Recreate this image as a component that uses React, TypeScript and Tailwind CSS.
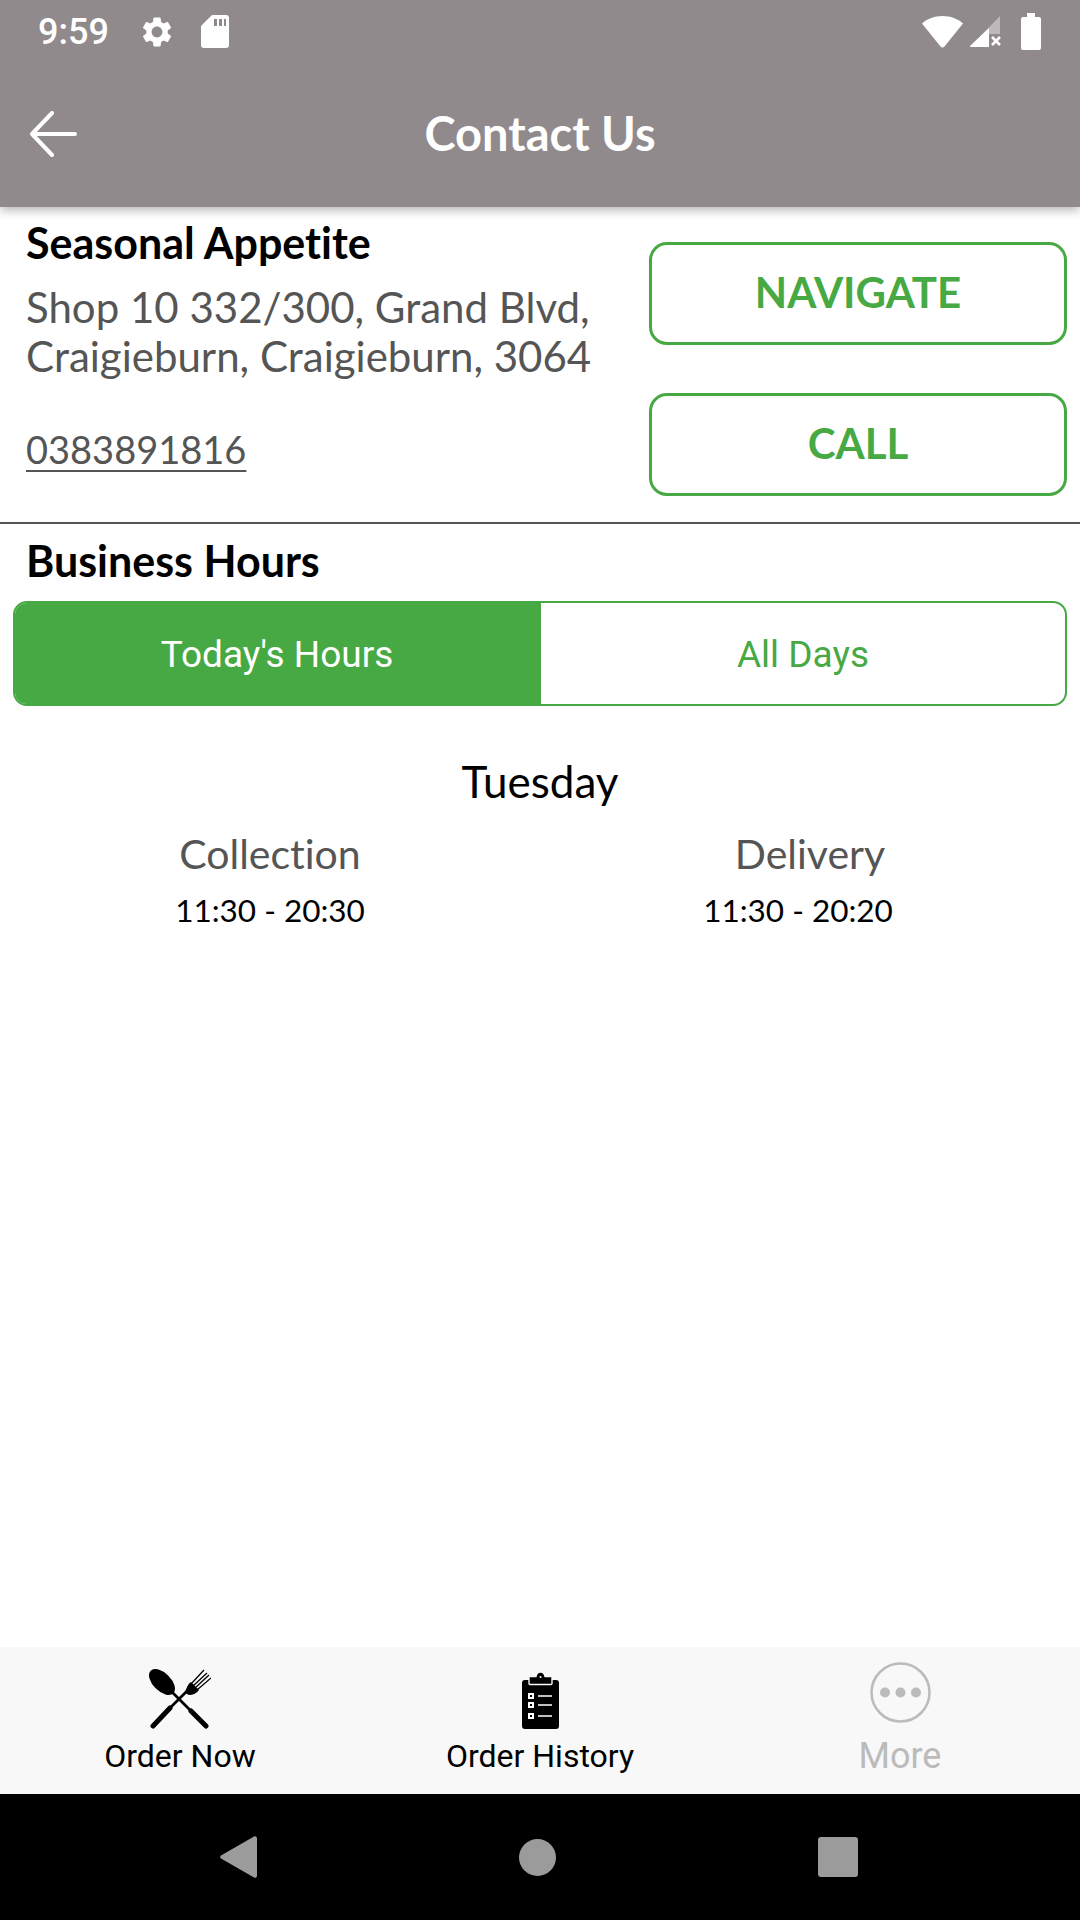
import React from 'react';

const proxima = "font-['Lato','Liberation_Sans',sans-serif] [font-variant-ligatures:none]";
const roboto = "font-['Roboto','Liberation_Sans',sans-serif]";

function StatusBar() {
  return (
    <div className="flex h-[60px] items-center pl-[38px] pr-[39px] pt-[3px]">
      <span className={`${roboto} text-[36px] font-medium leading-none text-white`}>9:59</span>
      <svg className="ml-[30px] h-[36px] w-[36px]" viewBox="0 0 24 24" fill="#fff">
        <path d="M19.14 12.94c.04-.3.06-.61.06-.94 0-.32-.02-.64-.07-.94l2.03-1.58a.49.49 0 0 0 .12-.61l-1.92-3.32a.488.488 0 0 0-.59-.22l-2.39.96c-.5-.38-1.03-.7-1.62-.94l-.36-2.54a.484.484 0 0 0-.48-.41h-3.84c-.24 0-.43.17-.47.41l-.36 2.54c-.59.24-1.13.57-1.62.94l-2.39-.96c-.22-.08-.47 0-.59.22L2.74 8.87c-.12.21-.08.47.12.61l2.03 1.58c-.05.3-.09.63-.09.94s.02.64.07.94l-2.03 1.58a.49.49 0 0 0-.12.61l1.92 3.32c.12.22.37.29.59.22l2.39-.96c.5.38 1.03.7 1.62.94l.36 2.54c.05.24.24.41.48.41h3.84c.24 0 .44-.17.47-.41l.36-2.54c.59-.24 1.13-.56 1.62-.94l2.39.96c.22.08.47 0 .59-.22l1.92-3.32c.12-.22.07-.47-.12-.61l-2.01-1.58zM12 15.6c-1.98 0-3.6-1.62-3.6-3.6s1.62-3.6 3.6-3.6 3.6 1.62 3.6 3.6-1.62 3.6-3.6 3.6z" />
      </svg>
      <svg className="ml-[26px] h-[33px] w-[28px]" viewBox="0 0 28 33">
        <path d="M11 0h14a3 3 0 0 1 3 3v27a3 3 0 0 1-3 3H3a3 3 0 0 1-3-3V11z" fill="#fff" />
        <path d="M13 4h3v7h-3zM18 4h3v7h-3zM23 4h2v7h-2z" fill="#918a8d" />
      </svg>
      <div className="ml-auto flex items-center">
        <svg className="h-[32px] w-[41px]" viewBox="0 0 41 32">
          <path d="M20.5 0C12.5 0 5.5 2.7 0 7.5L18.5 30.5a2.6 2.6 0 0 0 4 0L41 7.5C35.5 2.7 28.5 0 20.5 0z" fill="#fff" />
        </svg>
        <svg className="ml-[7px] h-[32px] w-[32px]" viewBox="0 0 32 32">
          <path d="M30 0v18H19v13H0z" fill="#fff" fillOpacity="0.4" />
          <path d="M19 12v19H1a1 1 0 0 1-1-1z" fill="#fff" />
          <path d="M22 21l8 8M30 21l-8 8" stroke="#fff" strokeWidth="2.6" />
        </svg>
        <svg className="ml-[19px] h-[37px] w-[20px]" viewBox="0 0 20 37">
          <path d="M6 0h8v4h4a2 2 0 0 1 2 2v29a2 2 0 0 1-2 2H2a2 2 0 0 1-2-2V6a2 2 0 0 1 2-2h4z" fill="#fff" />
        </svg>
      </div>
    </div>
  );
}

function OutlineButton({ label }: { label: string }) {
  return (
    <button className={`${proxima} flex h-[103px] w-full items-center justify-center rounded-[18px] border-[3px] border-[#47a943] pb-[3px] text-[42px] font-bold text-[#47a943]`}>
      {label}
    </button>
  );
}

function Hours({ title, time, timeClass }: { title: string; time: string; timeClass: string }) {
  return (
    <div className="flex flex-col items-center">
      <div className="text-[41px] leading-[48px] text-[#555555]">{title}</div>
      <div className={`mt-[8px] text-[31.5px] leading-[48px] text-black ${timeClass}`}>{time}</div>
    </div>
  );
}

function SpoonFork() {
  return (
    <svg className="h-[60px] w-[62px]" viewBox="0 0 62 60" fill="#000">
      <ellipse cx="13" cy="13" rx="9" ry="16" transform="rotate(-45 13 13)" />
      <path d="M22 22l23 23" stroke="#000" strokeWidth="2.6" />
      <path d="M42 42l15 15" stroke="#000" strokeWidth="5" strokeLinecap="round" />
      <path d="M40 20L18 42" stroke="#000" strokeWidth="2.6" />
      <path d="M21 39L4 57" stroke="#000" strokeWidth="5" strokeLinecap="round" />
      <path d="M36 24c1-5 3-9 6-11l8 8c-2 3-6 5-10 5z" />
      <path d="M42 15L55 1M44 17L58 4M46 19L60 6M48 21L62 9" stroke="#000" strokeWidth="1.3" />
    </svg>
  );
}

function Clipboard() {
  return (
    <svg className="h-[57px] w-[37px]" viewBox="0 0 37 57">
      <path d="M3 8h31a3 3 0 0 1 3 3v43a3 3 0 0 1-3 3H3a3 3 0 0 1-3-3V11a3 3 0 0 1 3-3z" fill="#000" />
      <path d="M7 4.5h7C14.5 1.5 16 0 18.5 0S22.5 1.5 23 4.5h7v7a1 1 0 0 1-1 1H8a1 1 0 0 1-1-1z" fill="#000" stroke="#f8f8f8" strokeWidth="1.4" />
      <circle cx="18.5" cy="5" r="1" fill="#f8f8f8" />
      <path d="M6 21h6v6H6zM6 30h6v6H6zM6 41h6v6H6z" fill="#fff" />
      <path d="M8 23h2v2H8zM8 32h2v2H8zM8 43h2v2H8z" fill="#000" />
      <path d="M16 24h14M16 33h14M16 44h14" stroke="#fff" strokeWidth="1.6" />
    </svg>
  );
}

function TabItem({ icon, label, muted }: { icon: React.ReactNode; label: string; muted?: boolean }) {
  return (
    <div className="flex h-full flex-col items-center">
      <div className="flex h-[82px] items-end">{icon}</div>
      <div className={`${roboto} mt-[5px] leading-[44px] ${muted ? 'text-[36px] text-[#bbbbbb]' : 'text-[32px] text-black'}`}>{label}</div>
    </div>
  );
}

export default function App() {
  return (
    <div className={`${proxima} flex h-[1920px] w-[1080px] flex-col overflow-hidden bg-white`}>
      {/* Header */}
      <div className="relative z-10 h-[207px] bg-[#918a8d] shadow-[0_3px_10px_rgba(0,0,0,0.3)]">
        <StatusBar />
        <div className="relative flex h-[147px] items-center justify-center">
          <svg className="absolute left-[29px] top-[51px] h-[46px] w-[48px]" viewBox="0 0 48 46" fill="none" stroke="#fff" strokeWidth="4" strokeLinecap="round" strokeLinejoin="round">
            <path d="M46 23H3M23 2L3 23l20 21" />
          </svg>
          <h1 className="text-[47px] font-bold text-white">Contact Us</h1>
        </div>
      </div>

      {/* Address and actions */}
      <div className="flex h-[317px] border-b-2 border-[#555555] pl-[26px] pr-[13px]">
        <div className="flex-1">
          <h2 className="mt-[12px] text-[43px] font-bold leading-[48px] text-black">Seasonal Appetite</h2>
          <p className="mt-[16px] text-[42px] leading-[49px] text-[#555555]">
            Shop 10 332/300, Grand Blvd,<br />Craigieburn, Craigieburn, 3064
          </p>
          <p className="mt-[44px] text-[38px] leading-[48px] text-[#555555] underline decoration-[2px] underline-offset-[6px]">0383891816</p>
        </div>
        <div className="flex w-[418px] flex-col gap-[48px] pt-[35px]">
          <OutlineButton label="NAVIGATE" />
          <OutlineButton label="CALL" />
        </div>
      </div>

      {/* Business hours */}
      <div className="flex-1">
        <h2 className="mt-[13px] pl-[26px] text-[43px] font-bold leading-[48px] text-black">Business Hours</h2>
        <div className={`${roboto} mx-[13px] mt-[16px] flex h-[105px] overflow-hidden rounded-[14px] border-2 border-[#47a943] text-[37px]`}>
          <div className="flex w-[526px] items-center justify-center bg-[#47a943] pr-[2px] pt-[2px] text-white">Today's Hours</div>
          <div className="flex flex-1 items-center justify-center pt-[2px] text-[#47a943]">All Days</div>
        </div>
        <div className="mt-[51px] text-center text-[44px] leading-[48px] text-black">Tuesday</div>
        <div className="mt-[25px] flex">
          <div className="w-[540px]"><Hours title="Collection" time="11:30 - 20:30" timeClass="" /></div>
          <div className="w-[540px]"><Hours title="Delivery" time="11:30 - 20:20" timeClass="-ml-[24px]" /></div>
        </div>
      </div>

      {/* Tab bar */}
      <div className="grid h-[147px] grid-cols-3 bg-[#f8f8f8]">
        <TabItem icon={<SpoonFork />} label="Order Now" />
        <TabItem icon={<Clipboard />} label="Order History" />
        <TabItem
          label="More"
          muted
          icon={
            <svg className="mb-[6px] h-[61px] w-[61px]" viewBox="0 0 61 61">
              <circle cx="30.5" cy="30.5" r="29" fill="none" stroke="#bbbbbb" strokeWidth="2.5" />
              <circle cx="15" cy="30.5" r="5" fill="#bbbbbb" />
              <circle cx="30.5" cy="30.5" r="5" fill="#bbbbbb" />
              <circle cx="46" cy="30.5" r="5" fill="#bbbbbb" />
            </svg>
          }
        />
      </div>

      {/* Android nav bar */}
      <div className="flex h-[126px] items-center justify-center gap-[262px] bg-black pr-[2px]">
        <svg className="h-[42px] w-[37px]" viewBox="0 0 37 42">
          <path d="M1 19.5L34 .5a2 2 0 0 1 3 1.5v38a2 2 0 0 1-3 1.5L1 22.5a2 2 0 0 1 0-3z" fill="#9b9b9b" />
        </svg>
        <div className="h-[37px] w-[37px] rounded-full bg-[#9b9b9b]" />
        <div className="h-[40px] w-[40px] rounded-[3px] bg-[#9b9b9b]" />
      </div>
    </div>
  );
}
